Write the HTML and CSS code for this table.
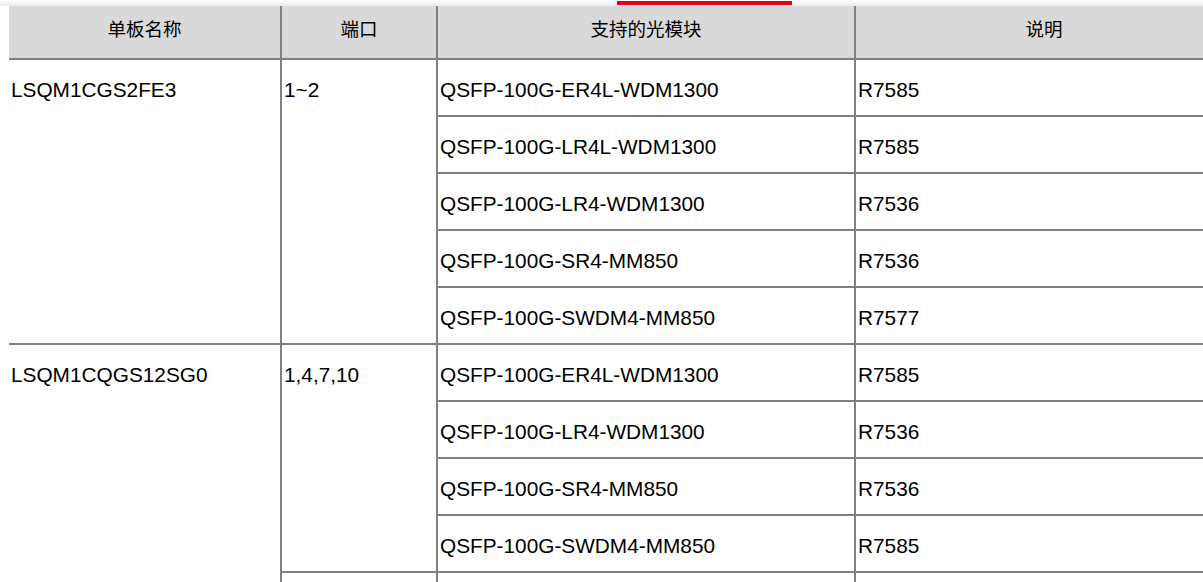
FILE: index.html
```html
<!DOCTYPE html>
<html lang="zh-CN">
<head>
<meta charset="utf-8">
<title>支持的光模块</title>
<link rel="stylesheet" href="styles.css">
</head>
<body>
<div class="topbar"><span class="tab-indicator"></span></div>
<div class="wrap">
<table class="spec">
  <colgroup>
    <col class="c1"><col class="c2"><col class="c3"><col class="c4">
  </colgroup>
  <thead>
    <tr><th>单板名称</th><th>端口</th><th>支持的光模块</th><th>说明</th></tr>
  </thead>
  <tbody>
    <tr><td rowspan="5">LSQM1CGS2FE3</td><td rowspan="5">1~2</td><td>QSFP-100G-ER4L-WDM1300</td><td>R7585</td></tr>
    <tr><td>QSFP-100G-LR4L-WDM1300</td><td>R7585</td></tr>
    <tr><td>QSFP-100G-LR4-WDM1300</td><td>R7536</td></tr>
    <tr><td>QSFP-100G-SR4-MM850</td><td>R7536</td></tr>
    <tr><td>QSFP-100G-SWDM4-MM850</td><td>R7577</td></tr>
    <tr><td rowspan="5">LSQM1CQGS12SG0</td><td rowspan="4">1,4,7,10</td><td>QSFP-100G-ER4L-WDM1300</td><td>R7585</td></tr>
    <tr><td>QSFP-100G-LR4-WDM1300</td><td>R7536</td></tr>
    <tr><td>QSFP-100G-SR4-MM850</td><td>R7536</td></tr>
    <tr><td>QSFP-100G-SWDM4-MM850</td><td>R7585</td></tr>
    <tr><td>2,5,8,11</td><td>QSFP-100G-ER4L-WDM1300</td><td>R7585</td></tr>
  </tbody>
</table>
</div>
</body>
</html>
```

FILE: styles.css
```css
html, body {
  margin: 0;
  padding: 0;
  overflow: hidden;
  background: #fff;
}
body {
  font-family: "Liberation Sans", Arial, "Noto Sans CJK SC", sans-serif;
  color: #000;
}
.topbar {
  position: relative;
  height: 6px;
  background: linear-gradient(#ffffff, #ececec);
}
.tab-indicator {
  position: absolute;
  left: 617px;
  top: 1px;
  width: 175px;
  height: 4px;
  background: #e60012;
}
.wrap {
  padding-left: 9px;
}
.spec {
  border-collapse: separate;
  border-spacing: 0;
  table-layout: fixed;
  width: 1225px;
}
.c1 { width: 273px; }
.c2 { width: 156px; }
.c3 { width: 418px; }
.c4 { width: 378px; }
.spec th,
.spec td {
  border-right: 2px solid #808080;
  border-bottom: 2px solid #808080;
  box-sizing: border-box;
}
.spec th {
  background: #d9d9d9;
  height: 54px;
  padding: 0 0 8px;
  font-family: "Noto Sans CJK SC", "Liberation Sans", sans-serif;
  font-size: 18.5px;
  font-weight: normal;
  text-align: center;
  vertical-align: middle;
}
.spec tbody tr {
  height: 57px;
}
.spec td {
  font-size: 20.8px;
  line-height: 24px;
  padding: 18px 2px 0 2px;
  vertical-align: top;
  text-align: left;
  white-space: nowrap;
}
```
